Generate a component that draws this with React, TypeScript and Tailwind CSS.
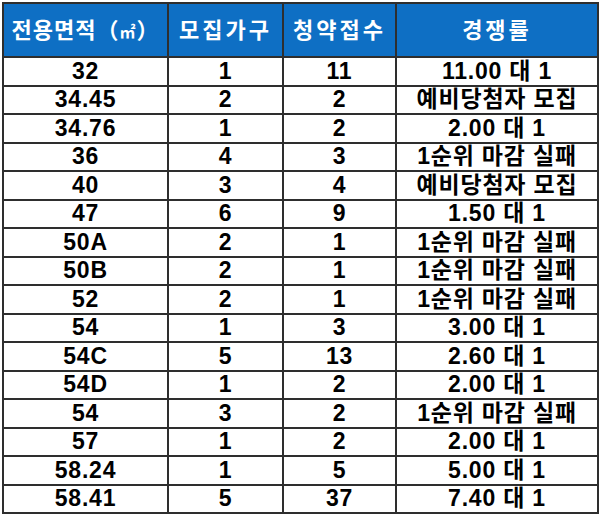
import React from 'react';

const rows: [string, string, string, string][] = [
  ['32', '1', '11', '11.00 대 1'],
  ['34.45', '2', '2', '예비당첨자 모집'],
  ['34.76', '1', '2', '2.00 대 1'],
  ['36', '4', '3', '1순위 마감 실패'],
  ['40', '3', '4', '예비당첨자 모집'],
  ['47', '6', '9', '1.50 대 1'],
  ['50A', '2', '1', '1순위 마감 실패'],
  ['50B', '2', '1', '1순위 마감 실패'],
  ['52', '2', '1', '1순위 마감 실패'],
  ['54', '1', '3', '3.00 대 1'],
  ['54C', '5', '13', '2.60 대 1'],
  ['54D', '1', '2', '2.00 대 1'],
  ['54', '3', '2', '1순위 마감 실패'],
  ['57', '1', '2', '2.00 대 1'],
  ['58.24', '1', '5', '5.00 대 1'],
  ['58.41', '5', '37', '7.40 대 1'],
];

const headers = ['모집가구', '청약접수', '경쟁률'];

export default function App() {
  return (
    <div className="w-[600px] h-[516px] bg-white pt-[2px] pl-[2px] font-['Liberation_Sans','Noto_Sans_CJK_KR',sans-serif]">
      <table className="border-collapse border-2 border-[#2e2e2e] table-fixed w-[595px]">
        <colgroup>
          <col className="w-[165px]" />
          <col className="w-[115px]" />
          <col className="w-[113px]" />
          <col className="w-[202px]" />
        </colgroup>
        <thead>
          <tr className="h-[54px] bg-[#0e6fc4]">
            <th className="border-2 border-[#2e2e2e] p-0 text-center text-[22px] font-bold text-white tracking-[1px] whitespace-nowrap">
              전용면적（<span className="text-[16px]">㎡</span>）
            </th>
            {headers.map((h) => (
              <th
                key={h}
                className="border-2 border-[#2e2e2e] p-0 text-center text-[22px] font-bold text-white tracking-[3px] whitespace-nowrap"
              >
                {h}
              </th>
            ))}
          </tr>
        </thead>
        <tbody>
          {rows.map((r, i) => (
            <tr key={i} className="h-[28.5px]">
              {r.map((c, j) => (
                <td
                  key={j}
                  className="border-2 border-[#2e2e2e] p-0 text-center text-[23px] leading-none font-bold text-black tracking-[0.8px] whitespace-nowrap"
                >
                  {c}
                </td>
              ))}
            </tr>
          ))}
        </tbody>
      </table>
    </div>
  );
}
